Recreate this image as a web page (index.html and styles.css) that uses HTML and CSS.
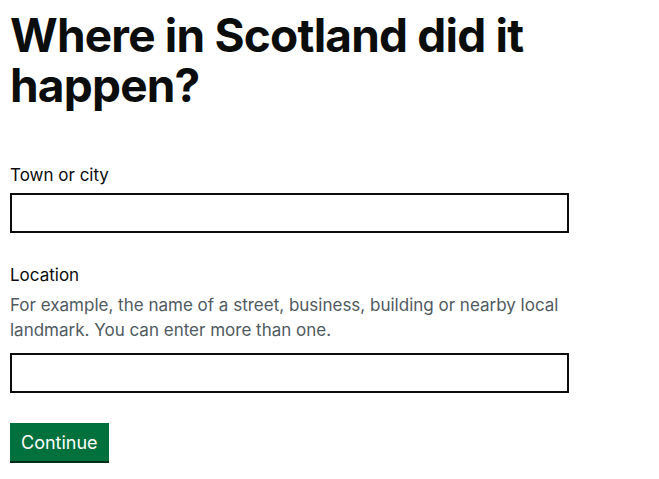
FILE: index.html
```html
<!DOCTYPE html>
<html lang="en">
<head>
    <meta charset="UTF-8">
    <meta name="viewport" content="width=device-width, initial-scale=1.0">
    <title>Where in Scotland did it happen?</title>
    <link rel="stylesheet" href="styles.css">
</head>
<body>

    <main class="page">
        <h1 class="heading">Where in Scotland did it happen?</h1>

        <form class="form">
            <!-- Town -->
            <div class="form-group">
                <label class="label" for="town">Town or city</label>
                <input class="input" id="town" type="text">
            </div>

            <!-- Location -->
            <div class="form-group">
                <label class="label" for="location">Location</label>
                <div class="hint">For example, the name of a street, business, building or nearby local landmark. You can enter more than one.</div>
                <input class="input" id="location" type="text">
            </div>

            <button class="button" type="button">Continue</button>
        </form>
    </main>

</body>
</html>
```

FILE: styles.css
```css
body {
    margin: 0;
    padding: 0;
    background-color: #fff;
    color: #0b0c0c;
    font-family: Inter, "Liberation Sans", Arial, sans-serif;
}
.page {
    padding: 10px 10px;
    max-width: 600px;
}
.heading {
    margin: 0 0 53px;
    font-size: 46px;
    line-height: 50px;
    font-weight: 700;
    letter-spacing: -0.8px;
}
.form-group {
    margin-bottom: 30px;
}
.label {
    display: block;
    margin-bottom: 5px;
    font-size: 17px;
    line-height: 25px;
}
.hint {
    margin-bottom: 10px;
    color: #505a5f;
    font-size: 17px;
    line-height: 25px;
}
.input {
    display: block;
    box-sizing: border-box;
    width: 559px;
    height: 40px;
    margin: 0;
    padding: 5px;
    border: 2px solid #0b0c0c;
    border-radius: 0;
    font-family: inherit;
    font-size: 17px;
}
.button {
    display: block;
    margin: 0;
    padding: 8px 9px 7px;
    border: 2px solid transparent;
    border-radius: 0;
    background-color: #00703c;
    box-shadow: 0 2px 0 #002d18;
    color: white;
    font-family: inherit;
    font-size: 18px;
    line-height: 19px;
    cursor: pointer;
}
```
